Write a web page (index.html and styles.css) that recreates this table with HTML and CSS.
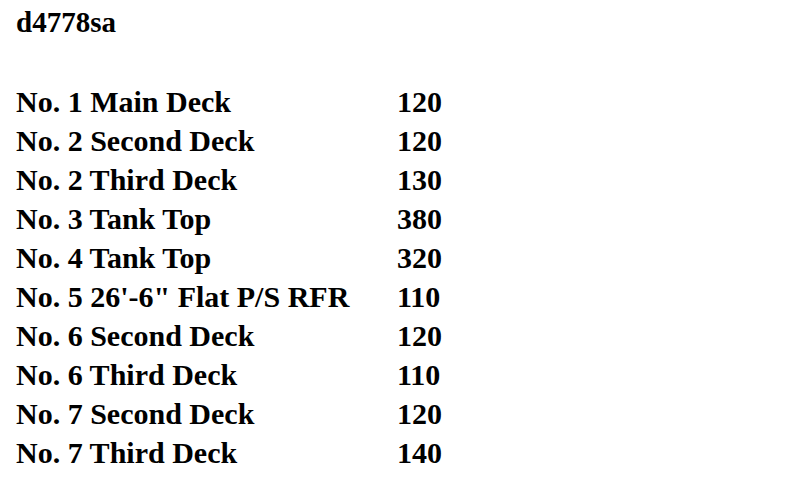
FILE: index.html
```html
<!DOCTYPE html>
<html>
<head>
<meta charset="utf-8">
<link rel="stylesheet" href="styles.css">
</head>
<body>
<div class="page">
  <div class="title">d4778sa</div>
  <div class="list">
    <div class="row"><span class="name">No. 1 Main Deck</span><span class="val">120</span></div>
    <div class="row"><span class="name">No. 2 Second Deck</span><span class="val">120</span></div>
    <div class="row"><span class="name">No. 2 Third Deck</span><span class="val">130</span></div>
    <div class="row"><span class="name">No. 3 Tank Top</span><span class="val">380</span></div>
    <div class="row"><span class="name">No. 4 Tank Top</span><span class="val">320</span></div>
    <div class="row"><span class="name">No. 5 26'-6" Flat P/S RFR</span><span class="val">110</span></div>
    <div class="row"><span class="name">No. 6 Second Deck</span><span class="val">120</span></div>
    <div class="row"><span class="name">No. 6 Third Deck</span><span class="val">110</span></div>
    <div class="row"><span class="name">No. 7 Second Deck</span><span class="val">120</span></div>
    <div class="row"><span class="name">No. 7 Third Deck</span><span class="val">140</span></div>
  </div>
</div>
</body>
</html>
```
FILE: styles.css
```css
html, body {
  margin: 0;
  padding: 0;
  background: #fff;
}
.page {
  padding: 4px 0 0 16px;
  font-family: "Liberation Serif", "Times New Roman", serif;
  font-weight: bold;
  color: #000;
}
.title {
  font-size: 29px;
  line-height: 36px;
}
.list {
  margin-top: 42px;
}
.row {
  display: flex;
  font-size: 30px;
  line-height: 39px;
}
.name {
  width: 381px;
}
```
